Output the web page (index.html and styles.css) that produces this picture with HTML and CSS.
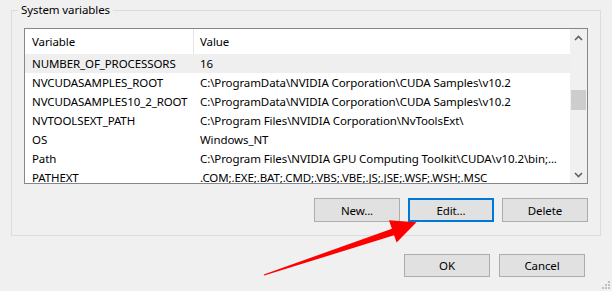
FILE: index.html
```html
<!DOCTYPE html>
<html>
<head>
    <title>System variables</title>
    <link rel="stylesheet" href="styles.css">
</head>
<body>
    <div class="dialog">
        <div class="group">
            <span class="group-title">System variables</span>
            <div class="list">
                <div class="table">
                    <div class="row head">
                        <div class="col-name">Variable</div>
                        <div class="col-value">Value</div>
                    </div>
                    <div class="row selected">
                        <div class="col-name">NUMBER_OF_PROCESSORS</div>
                        <div class="col-value">16</div>
                    </div>
                    <div class="row">
                        <div class="col-name">NVCUDASAMPLES_ROOT</div>
                        <div class="col-value">C:\ProgramData\NVIDIA Corporation\CUDA Samples\v10.2</div>
                    </div>
                    <div class="row">
                        <div class="col-name">NVCUDASAMPLES10_2_ROOT</div>
                        <div class="col-value">C:\ProgramData\NVIDIA Corporation\CUDA Samples\v10.2</div>
                    </div>
                    <div class="row">
                        <div class="col-name">NVTOOLSEXT_PATH</div>
                        <div class="col-value">C:\Program Files\NVIDIA Corporation\NvToolsExt\</div>
                    </div>
                    <div class="row">
                        <div class="col-name">OS</div>
                        <div class="col-value">Windows_NT</div>
                    </div>
                    <div class="row">
                        <div class="col-name">Path</div>
                        <div class="col-value">C:\Program Files\NVIDIA GPU Computing Toolkit\CUDA\v10.2\bin;...</div>
                    </div>
                    <div class="row">
                        <div class="col-name">PATHEXT</div>
                        <div class="col-value">.COM;.EXE;.BAT;.CMD;.VBS;.VBE;.JS;.JSE;.WSF;.WSH;.MSC</div>
                    </div>
                </div>
                <div class="scrollbar">
                    <div class="scroll-btn">
                        <svg width="9" height="6" viewBox="0 0 9 6"><path d="M1 5 L4.5 1.5 L8 5" fill="none" stroke="#606060" stroke-width="1.6"/></svg>
                    </div>
                    <div class="scroll-track">
                        <div class="scroll-thumb"></div>
                    </div>
                    <div class="scroll-btn">
                        <svg width="9" height="6" viewBox="0 0 9 6"><path d="M1 1 L4.5 4.5 L8 1" fill="none" stroke="#606060" stroke-width="1.6"/></svg>
                    </div>
                </div>
            </div>
            <div class="buttons">
                <button class="btn">New...</button>
                <button class="btn default">Edit...</button>
                <button class="btn">Delete</button>
            </div>
        </div>
        <div class="footer">
            <button class="btn small">OK</button>
            <button class="btn small">Cancel</button>
        </div>
    </div>

    <!-- грип изменения размера -->
    <svg class="grip" width="10" height="10" viewBox="0 0 10 10">
        <rect x="7" y="1" width="2" height="2" fill="#bfbfbf"/>
        <rect x="4" y="4" width="2" height="2" fill="#bfbfbf"/>
        <rect x="7" y="4" width="2" height="2" fill="#bfbfbf"/>
        <rect x="1" y="7" width="2" height="2" fill="#bfbfbf"/>
        <rect x="4" y="7" width="2" height="2" fill="#bfbfbf"/>
        <rect x="7" y="7" width="2" height="2" fill="#bfbfbf"/>
    </svg>

    <!-- стрелка-аннотация -->
    <svg class="arrow" width="612" height="291" viewBox="0 0 612 291">
        <polygon points="263.8,274.5 391.9,228.7 389,220.3 416.5,222.3 396.6,242.4 394.1,235.3 264.2,275.6" fill="#ff0000"/>
    </svg>
</body>
</html>
```

FILE: styles.css
```css
body {
    margin: 0;
    padding: 0;
    width: 612px;
    height: 291px;
    overflow: hidden;
    background: #f0f0f0;
    font-family: 'Noto Sans', 'Open Sans', sans-serif;
    font-size: 11.5px;
    letter-spacing: -0.1px;
    color: #000;
    position: relative;
}

.dialog {
    padding-top: 10px;
}

.group {
    position: relative;
    margin-left: 11px;
    width: 590px;
    border: 1px solid #dcdcdc;
    padding: 17px 12px 13px 12px;
    box-sizing: border-box;
    height: 226px;
}

.group-title {
    position: absolute;
    top: -9px;
    left: 6px;
    padding: 0 3px;
    background: #f0f0f0;
    line-height: 16px;
}

.list {
    display: flex;
    height: 156px;
    border: 1px solid #828790;
    background: #fff;
    box-sizing: border-box;
}

.table {
    flex: 1;
    overflow: hidden;
}

.row {
    display: flex;
    height: 19px;
    line-height: 19px;
    white-space: nowrap;
}

.row.head {
    height: 25px;
    line-height: 25px;
}

.row.selected {
    background: #efefef;
}

.col-name {
    width: 168px;
    padding-left: 7px;
    box-sizing: border-box;
    overflow: hidden;
}

.col-value {
    flex: 1;
    padding-left: 7px;
    overflow: hidden;
}

.head .col-value {
    border-left: 1px solid #e5e5e5;
    padding-left: 6px;
}

.scrollbar {
    width: 17px;
    background: #f0f0f0;
    display: flex;
    flex-direction: column;
}

.scroll-btn {
    height: 17px;
    display: flex;
    align-items: center;
    justify-content: center;
}

.scroll-track {
    flex: 1;
    padding-top: 44px;
}

.scroll-thumb {
    height: 20px;
    margin: 0 1px;
    background: #cdcdcd;
}

.buttons {
    display: flex;
    justify-content: flex-end;
    gap: 8px;
    margin-top: 14px;
}

.btn {
    width: 86px;
    height: 24px;
    background: #e1e1e1;
    border: 1px solid #adadad;
    font-family: inherit;
    font-size: 11.5px;
    letter-spacing: -0.1px;
    color: #000;
    padding: 0;
    box-sizing: border-box;
}

.btn.default {
    border: 2px solid #0078d7;
}

.footer {
    display: flex;
    justify-content: flex-end;
    gap: 9px;
    margin-top: 18px;
    padding-right: 27px;
}

.btn.small {
    height: 23px;
}

.grip {
    position: absolute;
    right: 1px;
    bottom: 1px;
}

.arrow {
    position: absolute;
    top: 0;
    left: 0;
    pointer-events: none;
}
```
